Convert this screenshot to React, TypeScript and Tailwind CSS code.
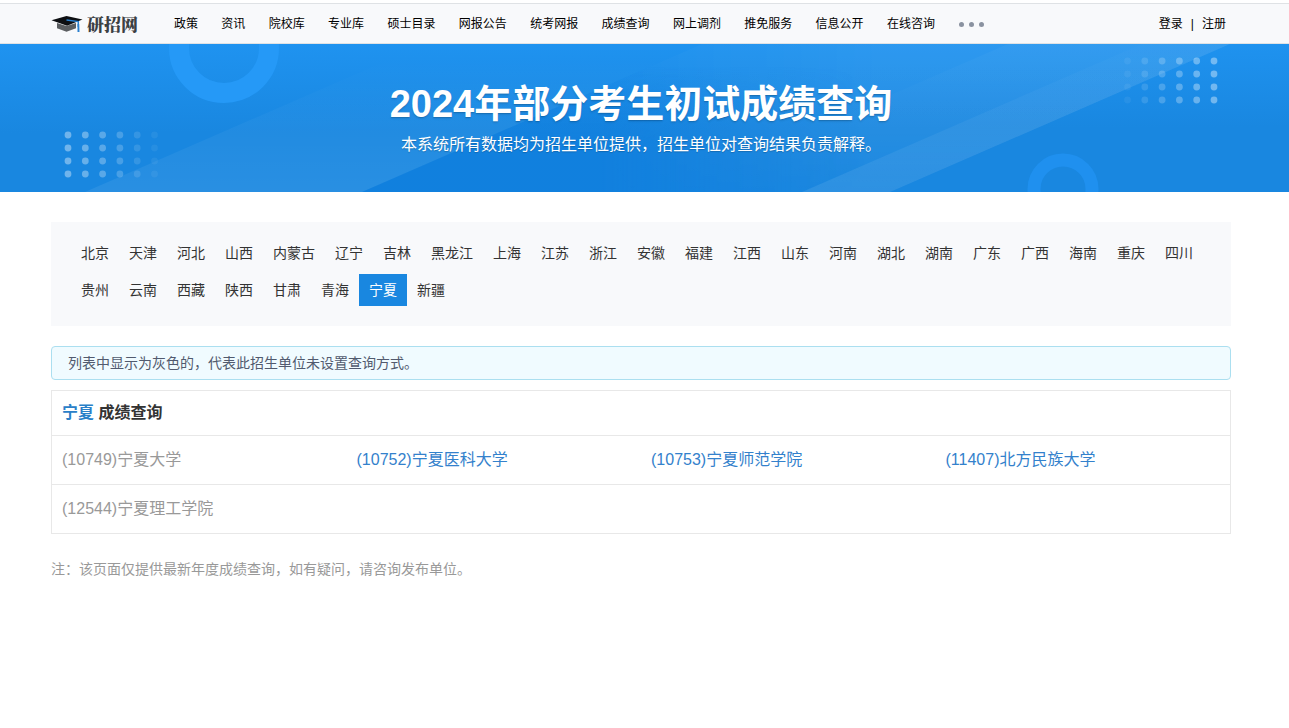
const navItems = [
  "政策", "资讯", "院校库", "专业库", "硕士目录", "网报公告", "统考网报",
  "成绩查询", "网上调剂", "推免服务", "信息公开", "在线咨询",
];

const provinces = [
  "北京", "天津", "河北", "山西", "内蒙古", "辽宁", "吉林", "黑龙江", "上海", "江苏", "浙江",
  "安徽", "福建", "江西", "山东", "河南", "湖北", "湖南", "广东", "广西", "海南", "重庆",
  "四川", "贵州", "云南", "西藏", "陕西", "甘肃", "青海", "宁夏", "新疆",
];

type School = { code: string; name: string; open: boolean };

const schoolRows: School[][] = [
  [
    { code: "10749", name: "宁夏大学", open: false },
    { code: "10752", name: "宁夏医科大学", open: true },
    { code: "10753", name: "宁夏师范学院", open: true },
    { code: "11407", name: "北方民族大学", open: true },
  ],
  [{ code: "12544", name: "宁夏理工学院", open: false }],
];

const dotOpacity = [0.38, 0.34, 0.28, 0.2, 0.12, 0.06];
const dotRows = [0, 13, 26, 39];

function Logo() {
  return (
    <a href="#" className="flex items-center gap-1" aria-label="研招网">
      <svg width="32" height="18" viewBox="0 0 32 18" aria-hidden="true">
        <path d="M6 8v5.200l9.500 3.600 9.500-3.600V8l-9.500 3z" fill="#5b5e61" />
        <path d="M0.500 5.200 15.500 1 31.500 4.400 16 10.800z" fill="#0d0f12" />
        <path d="M15.500 5 27.300 6.600V12" fill="none" stroke="#2a80cf" strokeWidth="1.500" />
        <path d="M26.500 9h1.700l.3 8h-2z" fill="#2a80cf" />
      </svg>
      <span className="font-['Noto_Serif_CJK_SC','Noto_Sans_CJK_SC',serif] text-[17px] leading-5 font-black text-[#3c4043]">
        研招网
      </span>
    </a>
  );
}

function BannerArt() {
  return (
    <svg
      className="absolute inset-0 h-full w-full"
      viewBox="0 0 1289 148"
      preserveAspectRatio="xMidYMid slice"
      aria-hidden="true"
    >
      <defs>
        <linearGradient id="sky" x1="0" y1="0" x2="0.040" y2="1">
          <stop offset="0" stopColor="#1f93f0" />
          <stop offset="0.600" stopColor="#1987e0" />
          <stop offset="1" stopColor="#1987e0" />
        </linearGradient>
        <linearGradient id="bandLeft" x1="0" y1="0" x2="0" y2="1">
          <stop offset="0.100" stopColor="#fff" stopOpacity="0" />
          <stop offset="1" stopColor="#fff" stopOpacity="0.070" />
        </linearGradient>
        <linearGradient id="valley" x1="0" y1="0" x2="0" y2="1">
          <stop offset="0.150" stopColor="#0878dc" stopOpacity="0" />
          <stop offset="0.700" stopColor="#0878dc" stopOpacity="0.450" />
        </linearGradient>
        <linearGradient id="fadeOut" gradientUnits="userSpaceOnUse" x1="600" y1="0" x2="860" y2="0">
          <stop offset="0" stopColor="#fff" />
          <stop offset="1" stopColor="#000" />
        </linearGradient>
        <linearGradient id="fadeIn" gradientUnits="userSpaceOnUse" x1="600" y1="0" x2="880" y2="0">
          <stop offset="0" stopColor="#000" />
          <stop offset="1" stopColor="#fff" />
        </linearGradient>
        <mask id="leftMask">
          <rect width="1289" height="148" fill="url(#fadeOut)" />
        </mask>
        <mask id="rightMask">
          <rect width="1289" height="148" fill="url(#fadeIn)" />
        </mask>
        <linearGradient id="glow" x1="0" y1="0" x2="0" y2="1">
          <stop offset="0" stopColor="#fff" stopOpacity="0.065" />
          <stop offset="0.600" stopColor="#fff" stopOpacity="0.055" />
          <stop offset="1" stopColor="#fff" stopOpacity="0.015" />
        </linearGradient>
        <linearGradient id="glowInner" x1="0" y1="0" x2="0" y2="1">
          <stop offset="0" stopColor="#fff" stopOpacity="0.030" />
          <stop offset="0.600" stopColor="#fff" stopOpacity="0" />
        </linearGradient>
        <linearGradient id="bandRight" x1="0" y1="0" x2="0" y2="1">
          <stop offset="0" stopColor="#fff" stopOpacity="0.010" />
          <stop offset="1" stopColor="#fff" stopOpacity="0.080" />
        </linearGradient>
      </defs>
      <rect width="1289" height="148" fill="url(#sky)" />
      <path d="M85 148 425 0h277L362 148z" fill="url(#bandLeft)" />
      <path d="M362 148 702 0h440L802 148z" fill="url(#valley)" mask="url(#leftMask)" />
      <path d="M362 148 702 0h528L890 148z" fill="url(#glow)" mask="url(#rightMask)" />
      <path d="M668 148 1008 0h222L890 148z" fill="url(#glowInner)" />
      <path d="M802 148 1142 0h88L890 148z" fill="url(#bandRight)" />
      <circle cx="224" cy="4" r="45" fill="none" stroke="#2599f7" strokeWidth="20" />
      <circle cx="1063" cy="145" r="29" fill="none" stroke="#1f90ef" strokeWidth="13" />
      {dotRows.map((dy) =>
        dotOpacity.map((opacity, i) => (
          <g key={`${dy}-${i}`} fill="#fff" fillOpacity={opacity}>
            <circle cx={68 + i * 17.3} cy={91 + dy} r="3.400" />
            <circle cx={1214 - i * 17.3} cy={17 + dy} r="3.400" />
          </g>
        )),
      )}
    </svg>
  );
}

export default function App() {
  return (
    <div className="min-h-screen bg-white font-['Liberation_Sans','Noto_Sans_CJK_SC',sans-serif] text-[#333]" lang="zh-CN">
      <header className="mt-[3px] border-y border-[#dfe2e5] bg-[#f8f9fb] pr-[7px] text-xs text-black">
        <div className="mx-auto flex h-[39px] max-w-[1180px] items-center">
          <Logo />
          <nav className="ml-[26px] flex items-center" aria-label="主导航">
            <div>
              {navItems.map((item) => (
                <span key={item}>
                  <a href="#" className="inline-block px-[10px]">{item}</a>{" "}
                </span>
              ))}
            </div>
            <button type="button" className="ml-[14px] flex gap-[5px] pt-[2px]" aria-label="更多">
              <span className="size-[5px] rounded-full bg-[#8a92a0]" />
              <span className="size-[5px] rounded-full bg-[#8a92a0]" />
              <span className="size-[5px] rounded-full bg-[#8a92a0]" />
            </button>
          </nav>
          <div className="mr-[5px] ml-auto flex gap-2">
            <a href="#">登录</a>
            <span>|</span>
            <a href="#">注册</a>
          </div>
        </div>
      </header>

      <section className="relative h-[148px] overflow-hidden bg-[#1987e0] pr-[7px] text-center text-white">
        <BannerArt />
        <div className="relative pt-8">
          <h1 className="text-[38px] leading-[56px] font-bold text-shadow-sm">2024年部分考生初试成绩查询</h1>
          <p className="text-base leading-[26px] text-shadow-xs">
            本系统所有数据均为招生单位提供，招生单位对查询结果负责解释。
          </p>
        </div>
      </section>

      <main className="pt-[30px] pr-[7px]">
        <div className="mx-auto max-w-[1180px]">
          <nav className="flex flex-wrap gap-y-[5px] bg-[#f8f9fb] px-5 pt-[15px] pb-5 text-sm" aria-label="省份">
            {provinces.map((name) => (
              <a
                key={name}
                href="#"
                aria-current={name === "宁夏" ? "page" : undefined}
                className={
                  name === "宁夏"
                    ? "bg-[#1987e0] px-[10px] leading-8 text-white"
                    : "px-[10px] leading-8"
                }
              >
                {name}
              </a>
            ))}
          </nav>

          <p className="mt-5 rounded border border-[#abdff0] bg-[#f0fbff] px-4 text-sm leading-8 text-[#515a6e]">
            列表中显示为灰色的，代表此招生单位未设置查询方式。
          </p>

          <section className="mt-[10px] border border-[#e8e8e8]">
            <h2 className="px-[10px] text-base leading-[44px] font-bold">
              <span className="text-[#2a80c8]">宁夏</span> 成绩查询
            </h2>
            <table className="w-full table-fixed border-separate border-spacing-0 text-base">
              <tbody>
                {schoolRows.map((row) => (
                  <tr key={row[0].code}>
                    {row.map((school) => (
                      <td
                        key={school.code}
                        colSpan={row.length === 1 ? 4 : 1}
                        className="h-[49px] border-t border-[#e8e8e8] px-[10px]"
                      >
                        {school.open ? (
                          <a href="#" className="text-[#3381cc]">({school.code}){school.name}</a>
                        ) : (
                          <span className="text-[#999]">({school.code}){school.name}</span>
                        )}
                      </td>
                    ))}
                  </tr>
                ))}
              </tbody>
            </table>
          </section>

          <p className="mt-6 text-sm leading-[22px] text-[#999]">
            注：该页面仅提供最新年度成绩查询，如有疑问，请咨询发布单位。
          </p>
        </div>
      </main>
    </div>
  );
}
